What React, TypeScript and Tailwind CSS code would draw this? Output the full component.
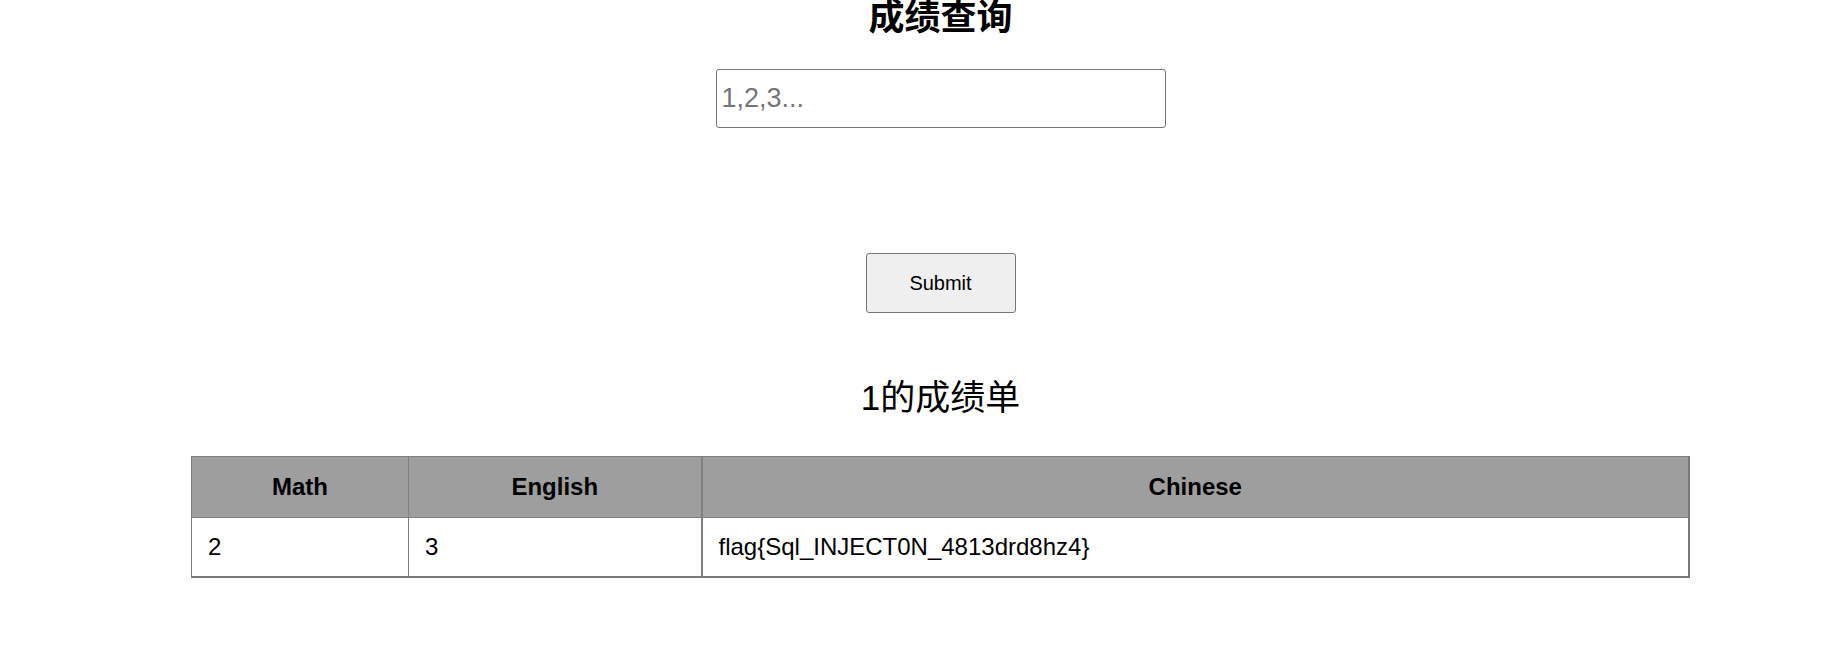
const rows = [{ math: "2", english: "3", chinese: "flag{Sql_INJECT0N_4813drd8hz4}" }];

const App = () => {
  return (
    <div className="min-h-screen bg-white pl-[59px] text-black font-['Liberation_Sans','Noto_Sans_CJK_SC',sans-serif]">
      <div className="flex flex-col items-center">
        <h1 className="m-0 text-[36px] leading-[36px] font-bold">成绩查询</h1>
        <input
          type="text"
          placeholder="1,2,3..."
          className="mt-[33px] h-[59px] w-[450px] rounded-[3px] border border-[#767676] bg-white px-[5px] text-[27px] placeholder:text-[#757575] outline-none"
        />
        <button className="mt-[125px] h-[60px] w-[150px] rounded-[3px] border border-[#767676] bg-[#efefef] text-[20px] text-black">
          Submit
        </button>
        <h2 className="mt-[64px] text-[35px] leading-[42px] font-normal">1的成绩单</h2>
        <table className="mt-[37px] w-[1499px] table-fixed border-collapse border-t border-l border-r-2 border-b-2 border-[#7a7a7a] text-[24px]">
          <colgroup>
            <col className="w-[217px]" />
            <col className="w-[293px]" />
            <col />
          </colgroup>
          <thead>
            <tr className="bg-[#9e9e9e]">
              <th className="h-[61px] border border-[#808080] font-bold">Math</th>
              <th className="h-[61px] border border-[#808080] border-r-2 font-bold">English</th>
              <th className="h-[61px] border border-[#808080] font-bold">Chinese</th>
            </tr>
          </thead>
          <tbody>
            {rows.map((r, i) => (
              <tr key={i}>
                <td className="h-[59px] border border-[#808080] px-4 text-left">{r.math}</td>
                <td className="h-[59px] border border-[#808080] border-r-2 px-4 text-left">{r.english}</td>
                <td className="h-[59px] border border-[#808080] px-4 text-left">{r.chinese}</td>
              </tr>
            ))}
          </tbody>
        </table>
      </div>
    </div>
  );
};

export default App;
